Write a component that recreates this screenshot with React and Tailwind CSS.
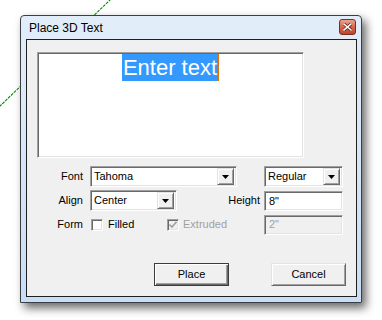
import React from "react";

const sunken =
  "border border-t-[#a0a0a0] border-l-[#a0a0a0] border-b-white border-r-white shadow-[inset_1px_1px_0_#696969,inset_-1px_-1px_0_#e3e3e3]";
const raised =
  "border border-t-[#e3e3e3] border-l-[#e3e3e3] border-b-[#696969] border-r-[#696969] shadow-[inset_1px_1px_0_#ffffff,inset_-1px_-1px_0_#a0a0a0]";

function DropButton() {
  return (
    <div className={`w-[17px] h-[17px] bg-[#f0f0f0] flex items-center justify-center ${raised}`}>
      <svg width="7" height="4" viewBox="0 0 7 4">
        <path d="M0 0h7L3.5 4z" fill="#000" />
      </svg>
    </div>
  );
}

function Combo({ value, width }) {
  return (
    <div className={`h-[21px] bg-white flex items-center pl-[3px] pr-[2px] ${sunken} ${width}`}>
      <span className="flex-1 text-[11px] leading-none">{value}</span>
      <DropButton />
    </div>
  );
}

function Field({ value, disabled }) {
  return (
    <div
      className={`w-[79px] h-[20px] flex items-center pl-[4px] text-[11px] ${sunken} ${
        disabled ? "bg-[#f0f0f0] text-[#a0a0a0]" : "bg-white text-black"
      }`}
    >
      {value}
    </div>
  );
}

export default function App() {
  return (
    <div
      className="relative w-[382px] h-[320px] bg-white overflow-hidden"
      style={{ fontFamily: '"Liberation Sans", Arial, sans-serif' }}
    >
      <svg className="absolute left-0 top-0" width="382" height="320">
        <line x1="111" y1="-1" x2="-1" y2="107" stroke="#008a00" strokeWidth="1.1" strokeDasharray="3 1" />
      </svg>

      <div className="relative ml-[20px] mt-[15px] w-[342px] h-[288px] border border-[#3a3f46] bg-gradient-to-b from-[#e2edf9] via-[#d6e6f8] to-[#c9ddf5] rounded-t-[4px] shadow-[4px_5px_10px_rgba(0,0,0,0.6)] flex flex-col pl-[5px] pr-[4px] pb-[5px]">
        <div className="h-[23px] flex items-center">
          <span className="ml-[3px] text-[12px] text-black">Place 3D Text</span>
          <div className="ml-auto mr-[1px] mt-[-2px] w-[17px] h-[16px] rounded-[3px] border border-[#7a2d22] bg-gradient-to-b from-[#e9a593] via-[#d5654d] to-[#c0452c] flex items-center justify-center">
            <svg width="9" height="8" viewBox="0 0 9 8">
              <path d="M1 1l7 6M8 1L1 7" stroke="#5a1c10" strokeWidth="3" strokeLinecap="square" />
              <path d="M1 1l7 6M8 1L1 7" stroke="#ffffff" strokeWidth="1.6" strokeLinecap="square" />
            </svg>
          </div>
        </div>

        <div className="flex-1 border border-[#1f1f1f] bg-[#f0f0f0] flex flex-col text-[11px] text-black">
          <div className={`ml-[10px] mt-[12px] w-[267px] h-[106px] bg-white flex justify-center pt-[1px] ${sunken}`}>
            <div className="h-[27px] flex items-center">
              <span className="bg-[#3399ff] text-white text-[22px] leading-[27px] px-[1px]">Enter text</span>
              <span className="w-[1px] h-[27px] bg-[#e07000]" />
            </div>
          </div>

          <div className="mt-[8px] h-[21px] flex items-center">
            <span className="w-[56px] text-right">Font</span>
            <div className="ml-[7px]">
              <Combo value="Tahoma" width="w-[147px]" />
            </div>
            <div className="ml-[27px]">
              <Combo value="Regular" width="w-[79px]" />
            </div>
          </div>

          <div className="mt-[3px] h-[21px] flex items-center">
            <span className="w-[56px] text-right">Align</span>
            <div className="ml-[7px]">
              <Combo value="Center" width="w-[87px]" />
            </div>
            <span className="w-[83px] text-right">Height</span>
            <div className="ml-[4px] mt-[1px]">
              <Field value={'8"'} />
            </div>
          </div>

          <div className="mt-[3px] h-[21px] flex items-center">
            <span className="w-[56px] text-right">Form</span>
            <div className="ml-[8px] w-[76px] flex items-center">
              <span className={`w-[12px] h-[12px] bg-white ${sunken}`} />
              <span className="ml-[5px]">Filled</span>
            </div>
            <div className="w-[97px] flex items-center">
              <span className={`w-[12px] h-[12px] bg-[#f0f0f0] flex items-center justify-center ${sunken}`}>
                <svg width="8" height="7" viewBox="0 0 8 7">
                  <path d="M0.5 3.5l2.5 2.5L7.5 0.8" stroke="#a0a0a0" strokeWidth="1.6" fill="none" />
                </svg>
              </span>
              <span className="ml-[4px] text-[#a0a0a0]">Extruded</span>
            </div>
            <Field value={'2"'} disabled />
          </div>

          <div className="mt-[28px] flex">
            <button className="ml-[127px] w-[75px] h-[23px] border border-[#3c3c3c] bg-[#f0f0f0] shadow-[inset_1px_1px_0_#ffffff,inset_-1px_-1px_0_#696969,inset_-2px_-2px_0_#a0a0a0] text-[11px]">
              Place
            </button>
            <button className={`ml-[42px] w-[75px] h-[23px] bg-[#f0f0f0] text-[11px] ${raised}`}>Cancel</button>
          </div>
        </div>
      </div>
    </div>
  );
}
